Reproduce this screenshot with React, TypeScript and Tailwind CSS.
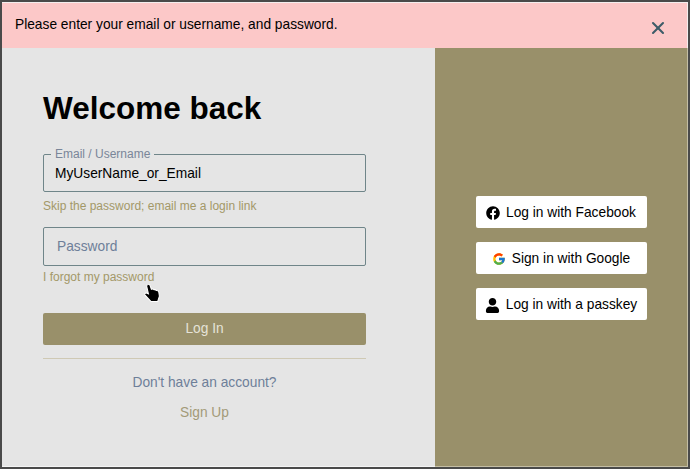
import { X } from 'lucide-react'
import { FaFacebook, FaUser } from 'react-icons/fa'
import { FcGoogle } from 'react-icons/fc'

function SocialButton({ icon, label }: { icon: React.ReactNode; label: string }) {
  return (
    <button className="flex h-[32px] w-[171px] items-center justify-center gap-[6px] rounded-[2px] bg-white pt-[2px] text-[13.75px] text-black">
      {icon}
      <span>{label}</span>
    </button>
  )
}

export default function App() {
  return (
    <div className="flex h-[469px] w-[690px] flex-col border-2 border-[#4a4a4a] font-['Liberation_Sans',sans-serif]">
      <div className="flex h-[46px] shrink-0 items-center justify-between border-t border-r border-[#f4eeee] bg-[#fcc8c8] pl-[13px] pr-[19px]">
        <p className="text-[13.75px] text-black">Please enter your email or username, and password.</p>
        <X size={20} strokeWidth={2.5} className="mt-[5px] text-[#3d5c68]" />
      </div>
      <div className="flex min-h-0 flex-1">
        <div className="relative w-[433px] border-b border-[#f4f4f4] bg-[#e5e5e5] px-[41px] pt-[40px]">
          <h1 className="text-[31.5px] leading-[40px] font-bold text-black">Welcome back</h1>
          <fieldset className="mt-[20px] h-[44px] w-[323px] rounded-[2px] border border-[#6f8589] px-[7px]">
            <legend className="px-[4px] text-xs leading-[12px] text-[#7a8699]">Email / Username</legend>
            <div className="pl-[4px] text-[13.75px] leading-[28px] text-black">MyUserName_or_Email</div>
          </fieldset>
          <a className="mt-[7px] block text-xs leading-[14px] text-[#a39868]">Skip the password; email me a login link</a>
          <div className="mt-[14px] flex h-[39px] w-[323px] items-center rounded-[2px] border border-[#6f8589] px-[13px] pt-[1px] text-[13.75px] text-[#6e7f99]">
            Password
          </div>
          <a className="mt-[4px] block text-xs leading-[14px] text-[#a39868]">I forgot my password</a>
          <button className="mt-[29px] h-[32px] w-[323px] rounded-[2px] bg-[#99906a] pt-[1px] text-[13.75px] text-[#e5e3d8]">Log In</button>
          <div className="mt-[13px] w-[323px] border-t border-[#cfc9b4]" />
          <div className="mt-[14px] w-[323px] text-center text-[13.75px] leading-[20px] text-[#6e7f99]">Don't have an account?</div>
          <div className="mt-[10px] w-[323px] text-center text-[13.75px] leading-[20px] text-[#a39a78]">Sign Up</div>
          <svg viewBox="0 0 18 18" width="19" height="19" className="absolute left-[142px] top-[236px]">
            <path
              d="M3.5 0.5 C4.5 0 5.5 0.6 5.8 1.6 L7 5 C8 4.6 9 4.8 9.5 5.4 C10.4 5.2 11.3 5.5 11.7 6.1 C12.8 6 13.8 6.6 14 7.6 L14.6 11.5 L13 16.5 L6.5 16.5 L1 10.5 C0.3 9.6 1 8.4 2.2 8.6 L4.2 9.4 L2.6 2.4 C2.4 1.5 2.8 0.8 3.5 0.5 Z"
              fill="#000"
              stroke="#fff"
              strokeWidth="1"
            />
          </svg>
        </div>
        <div className="flex flex-1 flex-col items-center justify-center gap-[14px] border-r border-b border-[#c4bea4] bg-[#99906a] pt-[2px]">
          <SocialButton icon={<FaFacebook size={14} />} label="Log in with Facebook" />
          <SocialButton icon={<FcGoogle size={14} />} label="Sign in with Google" />
          <SocialButton icon={<FaUser size={15} />} label="Log in with a passkey" />
        </div>
      </div>
    </div>
  )
}
